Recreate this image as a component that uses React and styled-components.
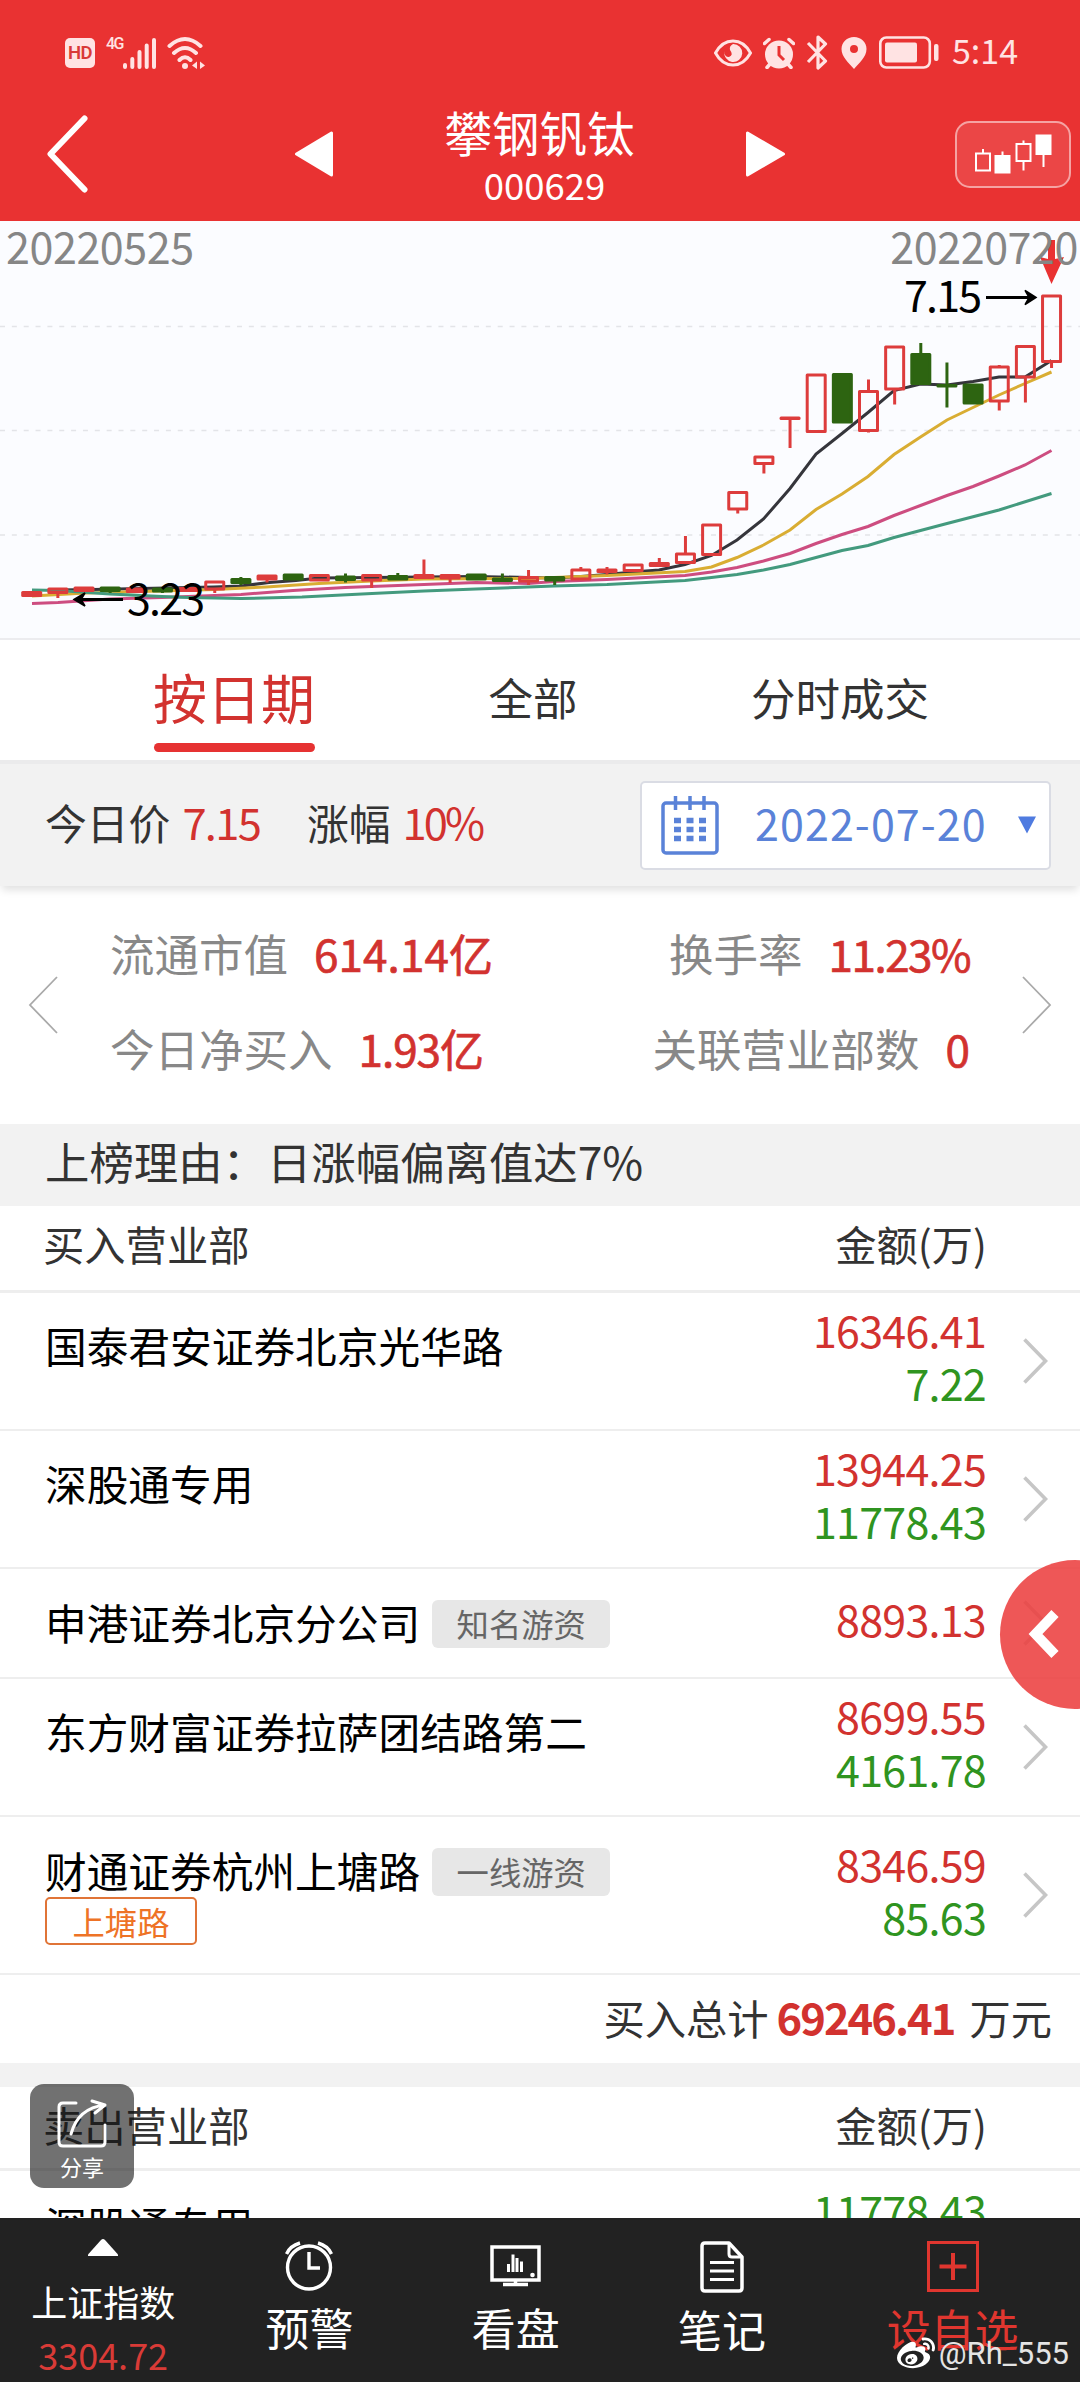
import styled, { createGlobalStyle, css } from "styled-components";
import { FaWeibo } from "react-icons/fa";

const GlobalStyle = createGlobalStyle`
  * {
    box-sizing: border-box;
  }

  body {
    margin: 0;
    background: #ffffff;
    font-family: "Noto Sans CJK SC", "Noto Sans", sans-serif;
    color: #333333;
  }

  svg {
    display: block;
    flex-shrink: 0;
  }
`;

const RED = "#d2322f";
const GREEN = "#2f9420";

const Page = styled.div`
  position: relative;
  display: flex;
  flex-direction: column;
  width: 1080px;
  height: 2382px;
  overflow: hidden;
  background: #ffffff;
`;

const Header = styled.header`
  height: 221px;
  background: #e93232;
  color: #ffffff;
`;

const StatusBar = styled.div`
  display: flex;
  align-items: center;
  justify-content: space-between;
  height: 87px;
  padding: 18px 65px 0;
  color: #ffe3e3;
`;

const StatusGroup = styled.div`
  display: flex;
  align-items: center;

  & svg + svg {
    margin-left: 11px;
  }
`;

const HdBadge = styled.span`
  width: 30px;
  height: 30px;
  margin-right: 11px;
  border-radius: 5px;
  background: #ffe3e3;
  color: #d93a38;
  font: 600 18.5px/30px Roboto, sans-serif;
  letter-spacing: -0.6px;
  text-align: center;
`;

const Network = styled.span`
  align-self: flex-start;
  width: 17px;
  font: 500 16px/15px Roboto, sans-serif;
  letter-spacing: -1.7px;
`;

const Clock = styled.span`
  width: 64px;
  margin: 0 -1px 5px 13px;
  font-size: 34px;
  line-height: 34px;
  white-space: nowrap;
`;

const TitleBar = styled.div`
  display: flex;
  align-items: center;
  height: 134px;
  padding: 0 9px 0 46px;
`;

const PrevStock = styled.div`
  margin-left: 207px;
`;

const StockTitle = styled.div`
  width: 413px;
  padding-top: 4px;
  text-align: center;

  & h1 {
    margin: 0;
    font-size: 47.5px;
    font-weight: 400;
    line-height: 54px;
  }

  & p {
    margin: 4px 0 0 10px;
    font-size: 36.5px;
    line-height: 44px;
  }
`;

const KlineButton = styled.div`
  margin-left: auto;
  width: 116px;
  height: 67px;
  border: 2px solid #f5a3a3;
  border-radius: 15px;
  background: #eb4646;
`;

const ChartBox = styled.section`
  position: relative;
  height: 419px;
  background: #fbfcff;
  border-bottom: 2px solid #ececef;
`;

const ChartDate = styled.span`
  position: absolute;
  top: 0;
  ${(props) => (props.$right ? "right: 2px;" : "left: 6px;")}
  font-size: 43px;
  line-height: 48px;
  letter-spacing: -0.4px;
  color: #868686;
`;

const Tabs = styled.nav`
  display: flex;
  height: 120px;
  padding-left: 84px;
  background: #ffffff;
`;

const Tab = styled.div`
  display: flex;
  flex-direction: column;
  align-items: center;
  width: ${(props) => props.$width}px;
  font-size: 44.5px;
  line-height: 114px;
  color: #333333;

  ${(props) =>
    props.$active &&
    css`
      font-size: 54px;
      color: ${RED};

      &::after {
        content: "";
        width: 161px;
        height: 9px;
        margin-top: -11px;
        border-radius: 5px;
        background: #e63232;
      }
    `}
`;

const FilterBar = styled.section`
  position: relative;
  display: flex;
  align-items: center;
  height: 126px;
  padding: 0 29px 0 45px;
  border-top: 4px solid #ebebec;
  background: #f2f2f2;
  box-shadow: 0 6px 8px -2px rgba(0, 0, 0, 0.12);
`;

const FilterItem = styled.div`
  display: flex;
  align-items: center;
  width: ${(props) => props.$width}px;
  margin-bottom: 6px;
  font-size: 41.8px;
  line-height: 48px;
  white-space: nowrap;

  & b {
    margin-left: 12px;
    font-size: 43.5px;
    font-weight: 400;
    letter-spacing: ${(props) => props.$spacing}px;
    color: ${RED};
  }
`;

const DatePicker = styled.div`
  display: flex;
  align-items: center;
  width: 411px;
  height: 89px;
  margin-left: auto;
  padding-left: 19px;
  border: 2px solid #dadce4;
  border-radius: 5px;
  background: #ffffff;
  color: #5a82d8;

  & span {
    width: 262px;
    margin-bottom: 6px;
    padding-left: 36px;
    font-size: 43px;
    line-height: 48px;
    letter-spacing: 1.1px;
    white-space: nowrap;
  }

  & svg:last-child {
    margin-left: 37px;
  }
`;

const Metrics = styled.section`
  display: flex;
  align-items: center;
  height: 238px;
  padding: 0 28px 0 28px;
`;

const MetricColumn = styled.div`
  display: flex;
  flex-direction: column;
  gap: 39px;
  margin-bottom: 10px;

  ${(props) =>
    props.$right
      ? css`
          align-items: flex-end;
          margin-left: auto;
          margin-right: 52px;
        `
      : css`
          margin-left: 52px;
        `}
`;

const Metric = styled.div`
  display: flex;
  align-items: baseline;
  font-size: 44.5px;
  line-height: 56px;
  color: #888888;

  & b {
    margin-left: 26px;
    font-size: 44px;
    font-weight: 400;
    letter-spacing: ${(props) => props.$spacing || 0}px;
    color: ${RED};
    -webkit-text-stroke: 0.7px ${RED};
  }
`;

const Reason = styled.div`
  height: 82px;
  padding-left: 45px;
  background: #f2f2f2;
  font-size: 44.4px;
  line-height: 73px;
`;

const TableHead = styled.div`
  display: flex;
  justify-content: space-between;
  height: ${(props) => props.$height}px;
  padding: 0 93px 0 43px;
  border-bottom: 3px solid #eeeeee;
  font-size: 41.3px;
  line-height: 75px;
`;

const BranchRow = styled.div`
  display: flex;
  align-items: center;
  height: ${(props) => props.$height}px;
  padding: 0 32px 0 45px;
  border-bottom: 2px solid #eeeeee;
`;

const Branch = styled.div`
  align-self: flex-start;
  padding-top: ${(props) => props.$top}px;
`;

const BranchName = styled.div`
  display: flex;
  align-items: flex-start;
  font-size: 41.7px;
  line-height: 48px;
  color: #000000;
`;

const Tag = styled.span`
  width: 178px;
  height: 48px;
  margin: 2px 0 0 12px;
  border-radius: 6px;
  background: #e7e7e7;
  color: #666666;
  font-size: 32.3px;
  line-height: 47px;
  text-align: center;
`;

const SeatTag = styled.div`
  width: 152px;
  height: 48px;
  margin-top: 1px;
  border: 2px solid #e07437;
  border-radius: 5px;
  color: #ee7326;
  font-size: 32.3px;
  line-height: 44px;
  text-align: center;
`;

const Amounts = styled.div`
  margin-left: auto;
  margin-right: 37px;
  text-align: right;
  font-size: 43px;
  line-height: 53px;
  letter-spacing: -0.75px;
  margin-bottom: 10px;
`;

const Buy = styled.div`
  color: ${RED};
`;

const Sell = styled.div`
  color: ${GREEN};
`;

const Total = styled.div`
  display: flex;
  justify-content: flex-end;
  align-items: baseline;
  height: 88px;
  padding-right: 28px;
  font-size: 41.3px;
  line-height: 83px;

  & b {
    margin: 0 15px 0 8px;
    font-size: 43.5px;
    letter-spacing: -2px;
    color: ${RED};
  }
`;

const Gap = styled.div`
  height: 24px;
  background: #f2f2f2;
`;

const Content = styled.main`
  flex: 1;
  min-height: 0;
  overflow: hidden;
`;

const BottomBar = styled.footer`
  display: flex;
  height: 164px;
  background: #222222;
  color: #ffffff;
`;

const BottomItem = styled.div`
  display: flex;
  flex-direction: column;
  align-items: center;
  width: ${(props) => props.$width || 206.5}px;
  padding-top: 23px;
  font-size: 44px;
  line-height: 52px;
  color: ${(props) => props.$color || "#ffffff"};

  & span {
    margin-top: 10px;
  }
`;

const IndexItem = styled.div`
  display: flex;
  flex-direction: column;
  align-items: center;
  width: 206.5px;
  padding-top: 21px;
  font-size: 36px;
  line-height: 53px;

  & span {
    margin-top: 19px;
  }

  & b {
    font-weight: 400;
    color: #d93b37;
  }
`;

const ShareButton = styled.div`
  position: absolute;
  left: 30px;
  top: 2084px;
  display: flex;
  flex-direction: column;
  align-items: center;
  width: 104px;
  height: 104px;
  padding-top: 15px;
  border-radius: 14px;
  background: rgba(18, 18, 18, 0.6);
  color: #ffffff;
  font-size: 22px;
  line-height: 30px;

  & span {
    margin-top: 2px;
  }
`;

const DrawerHandle = styled.div`
  position: absolute;
  left: 1000px;
  top: 1560px;
  width: 150px;
  height: 149px;
  padding: 49px 0 0 28px;
  border-radius: 50%;
  background: rgba(236, 64, 64, 0.88);
`;

const Watermark = styled.div`
  position: absolute;
  right: 11px;
  bottom: 8px;
  display: flex;
  align-items: center;
  gap: 4px;
  color: #ffffff;
  font: 400 31px/40px Roboto, sans-serif;

  & span {
    color: #e4e4e4;
  }
`;

// [kind, open/close top, open/close bottom, high, low]
const CANDLES = [
  ["up", 592.5, 595.5],
  ["up", 589, 592.5, 589, 598],
  ["up", 588, 590.5],
  ["down", 588, 590.5, 587, 593],
  ["up", 589, 591.5],
  ["down", 589, 591, 588, 593],
  ["up", 588.5, 590.5],
  ["up", 582, 589, 582, 593],
  ["down", 579.5, 582.5, 577, 585],
  ["up", 576, 579, 576, 582.5],
  ["down", 575, 579],
  ["up", 575.5, 580],
  ["down", 577, 579.5, 573.5, 582.5],
  ["up", 575.5, 580, 575, 588],
  ["down", 576.5, 579, 573, 580],
  ["up", 575.5, 577.5, 559.5, 578],
  ["up", 575.5, 578, 575, 583],
  ["down", 575, 579],
  ["down", 579, 580.5, 573.5, 581],
  ["up", 577.5, 581, 570, 585],
  ["down", 577.5, 580, 577, 585],
  ["up", 570, 579, 567, 579],
  ["up", 570, 571.5, 567, 574.5],
  ["up", 565, 570.5],
  ["up", 563.5, 565.5, 558, 566],
  ["up", 554, 562.5, 536, 563],
  ["up", 525, 554.5],
  ["up", 492.5, 509, 492, 513.5],
  ["up", 457, 463.5, 457, 473.5],
  ["up", 418, 418.5, 418, 448],
  ["up", 375, 431.5],
  ["down", 374.5, 422],
  ["up", 391.5, 430.5, 379.5, 432.5],
  ["up", 347, 389, 347, 404.5],
  ["down", 354.5, 383.5, 343, 385],
  ["down", 385.5, 386, 362.5, 407.5],
  ["down", 385, 403],
  ["up", 367, 401, 365, 410.5],
  ["up", 346.5, 377, 346, 402.5],
  ["up", 296, 361.5, 296, 368],
];

const AVERAGES = [
  {
    color: "#35353b",
    points:
      "58,590 93,589.5 214,587 241,586 269,582.5 296,580.5 319,578 372,577.5 424,577 476,576.5 528,577.5 554,578 581,576.5 607,574.5 633,572 659,570 685,564.5 711.5,555.5 737,540 763.5,519 790,488.5 816,454 842,433.5 868,412.5 894,390.5 920.5,384 947,385 973,381.5 999,377 1025,377 1051.5,360.5",
  },
  {
    color: "#d9ad33",
    points:
      "32,596 86,593 214,589.5 266,587 319,583.5 372,581 424,579 528,578.5 554,577.5 607,575.5 685,571.5 711.5,567 737,557.5 763.5,545 790,530 816,509.5 842,494 868,476.5 894,454.5 920.5,437 947,420 973,407.5 999,395 1025,383.5 1051.5,372",
  },
  {
    color: "#cd4d80",
    points:
      "32,603.5 58,602.5 110,599 162,597.5 241,594.5 293,590.5 345,587.5 398,585.5 476,582.5 528,583.5 554,581.5 607,579.5 685,575.5 711.5,572 737,567.5 763.5,561 790,553.5 816,543.5 842,534.5 868,526.5 894,515.5 920.5,505.5 947,495.5 973,486.5 999,476 1025,465 1051.5,450.5",
  },
  {
    color: "#439a7e",
    points:
      "32,590 58,590.5 110,594 162,596.5 188,597.5 241,598.5 302,597 372,593.5 424,591 476,589 528,587 554,586 607,584.5 685,580.5 711.5,577.5 737,574.5 763.5,570 790,564.5 816,557.5 842,550.5 868,545.5 894,537.5 947,523.5 999,510 1051.5,493.5",
  },
];

const Candle = ({ index, data }) => {
  const [kind, top, bottom, high, low] = data;
  const x = 31.7 + index * 26.15;
  const color = kind === "up" ? "#dd3c3c" : "#2d6411";
  return (
    <g stroke={color} strokeWidth="3">
      {high && high < top && <line x1={x} x2={x} y1={high} y2={top} />}
      {low && low > bottom && <line x1={x} x2={x} y1={bottom} y2={low} />}
      <rect
        x={x - 9}
        y={top}
        width="18"
        height={bottom - top}
        fill={kind === "up" ? "none" : color}
        strokeLinejoin="round"
      />
    </g>
  );
};

const KlineChart = () => (
  <ChartBox>
    <svg width="1080" height="417" viewBox="0 221 1080 417">
      {[326.5, 430.5, 535].map((y) => (
        <line
          key={y}
          x1="0"
          x2="1080"
          y1={y}
          y2={y}
          stroke="#e3e4e8"
          strokeWidth="1.6"
          strokeDasharray="5 6.85"
        />
      ))}
      {AVERAGES.map((line) => (
        <polyline
          key={line.color}
          points={line.points}
          fill="none"
          stroke={line.color}
          strokeWidth="3"
        />
      ))}
      {CANDLES.map((data, i) => (
        <Candle key={i} index={i} data={data} />
      ))}
      <g stroke="#000000" strokeWidth="3" fill="#000000">
        <line x1="80" x2="123" y1="599.5" y2="599.5" />
        <path d="M74 599.5L85 593L81 599.5L85 606Z" strokeWidth="1.5" />
        <line x1="986" x2="1032" y1="297.5" y2="297.5" />
        <path d="M1036 297.5L1025 290.5L1029 297.5L1025 304.5Z" strokeWidth="1.5" />
      </g>
      <g fontSize="43" fill="#000000" letterSpacing="-1.8">
        <text x="127" y="614.5">3.23</text>
        <text x="904" y="312">7.15</text>
      </g>
      <path
        d="M1048 240H1055V259L1064 257L1051.5 284L1040 257L1048 259Z"
        fill="#e93232"
      />
    </svg>
    <ChartDate>20220525</ChartDate>
    <ChartDate $right>20220720</ChartDate>
  </ChartBox>
);

const StatusIcons = () => (
  <StatusBar>
    <StatusGroup>
      <HdBadge>HD</HdBadge>
      <Network>4G</Network>
      <svg width="33" height="32" viewBox="0 0 33 32" stroke="currentColor" strokeWidth="4" strokeLinecap="round">
        <path d="M2 28V30M9.3 22V30M16.5 15V30M23.7 8.5V30M31 3V30" />
      </svg>
      <svg width="38" height="34" viewBox="2 0 38 34" fill="none" stroke="currentColor" strokeWidth="4" strokeLinecap="round">
        <path d="M4.500 10Q20 -4 35.500 10M9 17Q20 7 31 17M14.500 24Q20 18.500 25.500 24" />
        <circle cx="20" cy="30" r="3" fill="currentColor" stroke="none" />
        <path d="M32 25.500V33L27 29.500ZM35 25.500V33L40 29.500Z" fill="currentColor" stroke="none" />
      </svg>
    </StatusGroup>
    <StatusGroup>
      <svg width="38" height="28" viewBox="0 0 38 28" fill="none" stroke="currentColor" strokeWidth="3">
        <path d="M1.5 14Q8 2 19 2T36.5 14Q30 26 19 26T1.5 14Z" />
        <path d="M19 5A9 9 0 1 1 10.500 12Q10 18 15 18Q20 16 16 11Q15 7 19 5Z" fill="currentColor" stroke="none" />
      </svg>
      <svg width="32" height="32" viewBox="0 0 32 32">
        <circle cx="16" cy="17.5" r="14" fill="currentColor" />
        <path d="M1.5 6.5L6 2.5M30.5 6.5L26 2.5M4 30.5L7 27M28 30.5L25 27" stroke="currentColor" strokeWidth="3.5" strokeLinecap="round" />
        <path d="M16 9V18L21 23" fill="none" stroke="#e93232" strokeWidth="3" />
      </svg>
      <svg width="22" height="35" viewBox="0 0 22 35" fill="none" stroke="currentColor" strokeWidth="3.2" strokeLinejoin="round">
        <path d="M2 8L19.5 26L12 33V2L19.5 9L2 27" />
      </svg>
      <svg width="28" height="33" viewBox="-2 0 28 33">
        <path fillRule="evenodd" fill="currentColor" d="M13 1C6 1 0.5 6 0.5 13C0.5 21 8 27 13 33C18 27 25.5 21 25.5 13C25.5 6 20 1 13 1ZM13 9A4 4 0 1 1 13 17A4 4 0 1 1 13 9Z" />
      </svg>
      <svg width="61" height="33" viewBox="-1 0 61 33">
        <rect x="1.3" y="1.5" width="49.5" height="30" rx="6" fill="none" stroke="currentColor" strokeWidth="2.6" />
        <rect x="6" y="6.5" width="32" height="20" rx="2" fill="currentColor" />
        <rect x="55" y="8" width="4.5" height="17" rx="2" fill="currentColor" />
      </svg>
      <Clock>5:14</Clock>
    </StatusGroup>
  </StatusBar>
);

const KlineIcon = () => (
  <svg width="112" height="63" viewBox="957 123 112 63" fill="none" stroke="#ffffff" strokeWidth="2">
    <path d="M976 153.5H990V170.5H976ZM983 149V153.5" />
    <path d="M995.5 156H1009.5V172.5H995.5ZM1002.5 151.5V156" fill="#ffffff" />
    <path d="M1016.5 144H1030.5V161H1016.5ZM1023.5 140.5V144M1023.5 161V170.5" />
    <path d="M1036.5 135.5H1050.5V154H1036.5ZM1043.5 154V167" fill="#ffffff" />
  </svg>
);

const CalendarIcon = () => (
  <svg width="58" height="59" viewBox="0 0 58 59" fill="none" stroke="currentColor" strokeWidth="3.5">
    <rect x="2" y="7" width="54" height="50" rx="3" />
    <path d="M14.5 0V14M29 0V14M43 0V14" />
    <path d="M13 24.5H20M25.500 24.500H32.500M38 24.500H45M13 33.500H20M25.500 33.500H32.500M38 33.500H45M13 42.500H20M25.500 42.500H32.500M38 42.500H45" strokeWidth="5.5" />
  </svg>
);

const RowChevron = () => (
  <svg width="25" height="46" viewBox="0 0 25 46" fill="none" stroke="#c6c6c6" strokeWidth="3.6">
    <path d="M1.5 1.5L22.5 23L1.5 44.5" />
  </svg>
);

const BUY_ROWS = [
  { name: "国泰君安证券北京光华路", buy: "16346.41", sell: "7.22", height: 138, top: 28 },
  { name: "深股通专用", buy: "13944.25", sell: "11778.43", height: 138, top: 28 },
  { name: "申港证券北京分公司", tag: "知名游资", buy: "8893.13", height: 110, top: 29 },
  { name: "东方财富证券拉萨团结路第二", buy: "8699.55", sell: "4161.78", height: 138, top: 28 },
  { name: "财通证券杭州上塘路", tag: "一线游资", seat: "上塘路", buy: "8346.59", sell: "85.63", height: 158, top: 29 },
];

const BuyRow = ({ row }) => (
  <BranchRow $height={row.height}>
    <Branch $top={row.top}>
      <BranchName>
        {row.name}
        {row.tag && <Tag>{row.tag}</Tag>}
      </BranchName>
      {row.seat && <SeatTag>{row.seat}</SeatTag>}
    </Branch>
    <Amounts>
      <Buy>{row.buy}</Buy>
      {row.sell && <Sell>{row.sell}</Sell>}
    </Amounts>
    <RowChevron />
  </BranchRow>
);

const App = () => {
  return (
    <Page>
      <GlobalStyle />
      <Header>
        <StatusIcons />
        <TitleBar>
          <svg width="42" height="78" viewBox="0 0 42 78" fill="none" stroke="#ffffff" strokeWidth="6" strokeLinecap="round" strokeLinejoin="round">
            <path d="M38.5 3.5L4.5 39L38.5 74.5" />
          </svg>
          <PrevStock>
            <svg width="38" height="46" viewBox="0 0 38 46" fill="#ffffff" stroke="#ffffff" strokeWidth="3" strokeLinejoin="round">
              <path d="M1.5 23L36.5 2V44Z" />
            </svg>
          </PrevStock>
          <StockTitle>
            <h1>攀钢钒钛</h1>
            <p>000629</p>
          </StockTitle>
          <svg width="39" height="46" viewBox="0 0 39 46" fill="#ffffff" stroke="#ffffff" strokeWidth="3" strokeLinejoin="round">
            <path d="M37.5 23L1.5 2V44Z" />
          </svg>
          <KlineButton>
            <KlineIcon />
          </KlineButton>
        </TitleBar>
      </Header>
      <Content>
        <KlineChart />
        <Tabs>
          <Tab $width={300} $active>
            按日期
          </Tab>
          <Tab $width={298}>全部</Tab>
          <Tab $width={316}>分时成交</Tab>
        </Tabs>
        <FilterBar>
          <FilterItem $width={262} $spacing={-1.7}>
            今日价<b>7.15</b>
          </FilterItem>
          <FilterItem $width={200} $spacing={-3}>
            涨幅<b>10%</b>
          </FilterItem>
          <DatePicker>
            <CalendarIcon />
            <span>2022-07-20</span>
            <svg width="18" height="18" viewBox="0 0 18 18">
              <path d="M0 0.5H18L9 17.5Z" fill="#4f7be0" />
            </svg>
          </DatePicker>
        </FilterBar>
        <Metrics>
          <svg width="30" height="58" viewBox="0 0 30 58" fill="none" stroke="#a9a9a9" strokeWidth="1.8">
            <path d="M29 1L2 29L29 57" />
          </svg>
          <MetricColumn>
            <Metric $spacing={0.1}>
              流通市值<b>614.14亿</b>
            </Metric>
            <Metric $spacing={-1}>
              今日净买入<b>1.93亿</b>
            </Metric>
          </MetricColumn>
          <MetricColumn $right>
            <Metric $spacing={-1.5}>
              换手率<b>11.23%</b>
            </Metric>
            <Metric>
              关联营业部数<b>0</b>
            </Metric>
          </MetricColumn>
          <svg width="30" height="58" viewBox="0 0 30 58" fill="none" stroke="#a9a9a9" strokeWidth="1.8">
            <path d="M1 1L28 29L1 57" />
          </svg>
        </Metrics>
        <Reason>上榜理由：日涨幅偏离值达7%</Reason>
        <TableHead $height={87}>
          <span>买入营业部</span>
          <span>金额(万)</span>
        </TableHead>
        {BUY_ROWS.map((row) => (
          <BuyRow key={row.name} row={row} />
        ))}
        <Total>
          买入总计<b>69246.41</b>万元
        </Total>
        <Gap />
        <TableHead $height={84}>
          <span>卖出营业部</span>
          <span>金额(万)</span>
        </TableHead>
        <BranchRow $height={142}>
          <Branch $top={30}>
            <BranchName>深股通专用</BranchName>
          </Branch>
          <Amounts>
            <Sell>11778.43</Sell>
            <Buy>13944.25</Buy>
          </Amounts>
          <RowChevron />
        </BranchRow>
      </Content>
      <BottomBar>
        <IndexItem>
          <svg width="30" height="17" viewBox="0 0 30 17" fill="#ffffff">
            <path d="M15 0Q16 0 17 1L30 15.5V17H0V15.5L13 1Q14 0 15 0Z" />
          </svg>
          <span>上证指数</span>
          <b>3304.72</b>
        </IndexItem>
        <BottomItem>
          <svg width="48" height="50" viewBox="0 0 48 50" fill="none" stroke="#ffffff" strokeWidth="3.4">
            <circle cx="24" cy="26.5" r="21.5" />
            <path d="M24 11V27H35M1.5 13Q5 5 15 2M46.5 13Q43 5 33 2" />
          </svg>
          <span>预警</span>
        </BottomItem>
        <BottomItem>
          <svg width="51" height="50" viewBox="0 0 51 50" fill="none" stroke="#ffffff">
            <rect x="2" y="6" width="47" height="33" strokeWidth="3.5" />
            <path d="M13 43.5H38M25.5 39V43" strokeWidth="3.5" />
            <path d="M18.5 23V31M23 13.5V31M27 17V31M31.5 20.5V31" strokeWidth="3" />
            <circle cx="42.5" cy="34" r="2.3" fill="#ffffff" stroke="none" />
          </svg>
          <span>看盘</span>
        </BottomItem>
        <BottomItem>
          <svg width="44" height="52" viewBox="0 0 44 52" fill="none" stroke="#ffffff" strokeWidth="3.5" strokeLinejoin="round">
            <path d="M5 2H29L42 16V47Q42 50 39 50H5Q2 50 2 47V5Q2 2 5 2Z" />
            <path d="M29 2V13Q29 16 32 16H42" strokeWidth="3" />
            <path d="M10 21.5H34M10 30H34M10 38.5H34" strokeWidth="3" />
          </svg>
          <span>笔记</span>
        </BottomItem>
        <BottomItem $width={255} $color="#e0362f">
          <svg width="52" height="51" viewBox="0 0 52 51" fill="none" stroke="currentColor" strokeWidth="3">
            <rect x="1.5" y="1.5" width="49" height="48" />
            <path d="M26 12V39M12.5 25.5H39.5" strokeWidth="4" />
          </svg>
          <span>设自选</span>
        </BottomItem>
      </BottomBar>
      <DrawerHandle>
        <svg width="32" height="50" viewBox="0 0 32 50" fill="none" stroke="#ffffff" strokeWidth="10">
          <path d="M27 4.5L7.5 25L27 45.5" />
        </svg>
      </DrawerHandle>
      <ShareButton>
        <svg width="52" height="50" viewBox="0 0 52 50" fill="none" stroke="#ffffff" strokeWidth="3" strokeLinecap="round" strokeLinejoin="round">
          <path d="M20 4H7Q3 4 3 8V43Q3 47 7 47H45Q49 47 49 43V26" />
          <path d="M15 35Q22 9 49 6M36 2L49 6L39 14" />
        </svg>
        <span>分享</span>
      </ShareButton>
      <Watermark>
        <FaWeibo size={38} />
        <span>@Rh_555</span>
      </Watermark>
    </Page>
  );
};

export default App;
